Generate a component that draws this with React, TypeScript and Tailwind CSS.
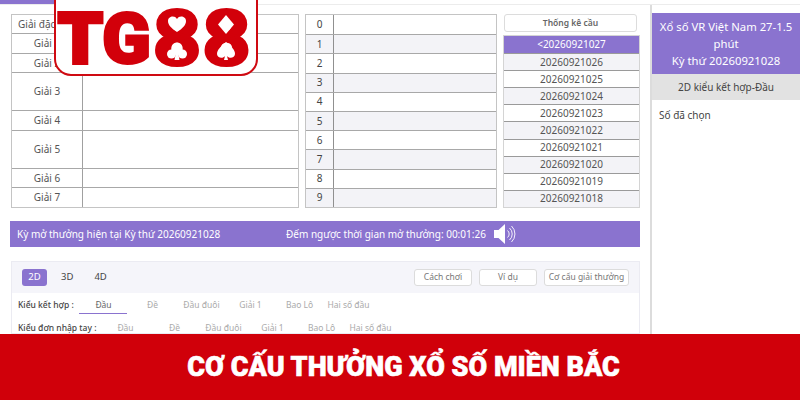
const prizeRows = [
  { label: "Giải đặc biệt", h: "h-[18px]" },
  { label: "Giải 1", h: "h-[20px]" },
  { label: "Giải 2", h: "h-[19px]" },
  { label: "Giải 3", h: "h-[38px]" },
  { label: "Giải 4", h: "h-[20px]" },
  { label: "Giải 5", h: "h-[38px]" },
  { label: "Giải 6", h: "h-[19px]" },
  { label: "Giải 7", h: "h-[20px]" },
];

const issues = [
  "<20260921027",
  "20260921026",
  "20260921025",
  "20260921024",
  "20260921023",
  "20260921022",
  "20260921021",
  "20260921020",
  "20260921019",
  "20260921018",
];

const comboTabs = ["Đầu", "Đề", "Đầu đuôi", "Giải 1", "Bao Lô", "Hai số đầu"];

function PrizeTable() {
  return (
    <div className="w-[288px] border border-[#c4c4c4] bg-white">
      {prizeRows.map((row, i) => (
        <div key={row.label} className={`flex ${row.h} ${i > 0 ? "border-t border-[#a8a8a8]" : ""}`}>
          <div className="flex w-[71px] shrink-0 items-center justify-center whitespace-nowrap border-r border-[#a0a0a0] text-[10px] text-[#555]">
            {row.label}
          </div>
          <div className="flex-1" />
        </div>
      ))}
    </div>
  );
}

function DigitTable() {
  return (
    <div className="ml-[6px] w-[192px] border border-[#c4c4c4]">
      {[0, 1, 2, 3, 4, 5, 6, 7, 8, 9].map((n) => (
        <div
          key={n}
          className={`flex h-[19.2px] ${n > 0 ? "border-t border-[#a8a8a8]" : ""} ${n % 2 ? "bg-[#f3f3f7]" : "bg-white"}`}
        >
          <div className="flex w-[28px] shrink-0 items-center justify-center border-r border-[#909090] text-[10px] text-[#444]">
            {n}
          </div>
          <div className="flex-1" />
        </div>
      ))}
    </div>
  );
}

function IssueList() {
  return (
    <div className="ml-[6px] flex w-[137px] flex-col">
      <div className="mx-[1px] flex h-[18px] w-[133px] items-center justify-center rounded-[3px] border border-[#dcdcdc] bg-white text-[8.5px] font-semibold text-[#666]">
        Thống kê cầu
      </div>
      <div className="mt-[3px] border border-[#d4d4d4]">
        {issues.map((item, i) => (
          <div
            key={item}
            className={`flex h-[17.1px] items-center justify-center text-[10px] ${
              i === 0
                ? "bg-[#8a73cf] text-white"
                : `border-t border-[#9a9a9a] text-[#555] ${i % 2 ? "bg-[#f3f3f7]" : "bg-white"}`
            }`}
          >
            {item}
          </div>
        ))}
      </div>
    </div>
  );
}

function SpeakerIcon() {
  return (
    <svg width="22" height="20" viewBox="0 0 22 20" className="ml-[8px]">
      <path d="M0 6h4.500L11 0v20l-6.500-6H0z" fill="#fff" />
      <path d="M13.500 6.500a4.500 4.500 0 0 1 0 7M15.500 4a8 8 0 0 1 0 12M17.500 2a11 11 0 0 1 0 16" fill="none" stroke="#fff" strokeWidth="0.9" />
    </svg>
  );
}

function TabCells({ active }: { active?: boolean }) {
  return (
    <>
      {comboTabs.map((tab, i) => (
        <span
          key={tab}
          className={`w-[49px] whitespace-nowrap text-center ${active && i === 0 ? "text-[#666]" : "text-[#aaa]"}`}
        >
          {tab}
        </span>
      ))}
    </>
  );
}

function SuitLogo() {
  return (
    <div className="absolute left-[54px] top-[-10px] flex h-[86px] w-[204px] items-center rounded-b-[17px] border-2 border-[#cf0a12] bg-white pl-[5px] pt-[10px]">
      <div className="relative flex h-[60px] w-[192px] items-center font-['Roboto'] text-[71px] leading-none font-black text-[#d2000a]">
        <span className="flex w-[39px] justify-center [-webkit-text-stroke:4px_#d2000a]">T</span>
        <span className="ml-[5px] flex w-[43px] justify-center [-webkit-text-stroke:3px_#d2000a]">G</span>
        <span className="ml-[5px] flex w-[48px] scale-x-[1.18] scale-y-[1.1] justify-center [-webkit-text-stroke:2px_#d2000a]">8</span>
        <span className="ml-[2px] flex w-[47px] scale-x-[1.18] scale-y-[1.1] justify-center [-webkit-text-stroke:2px_#d2000a]">8</span>
        <svg viewBox="0 0 192 60" className="absolute inset-0 h-full w-full">
          <g fill="#fff">
            <path d="M116 24c-6-4-9-7-9-11 0-5 7-6 9-2 2-4 9-3 9 2 0 4-3 7-9 11z" />
            <circle cx="116" cy="39" r="4.500" />
            <circle cx="110.500" cy="46" r="4.500" />
            <circle cx="121.500" cy="46" r="4.500" />
            <path d="M115 44h2l1.500 8h-5z" />
            <path d="M165 7l8 9.500-8 9.500-8-9.500z" />
            <path d="M165 34c6 5 9 8 9 12 0 4-6 5-8 2l1 4h-4l1-4c-2 3-8 2-8-2 0-4 3-7 9-12z" />
          </g>
        </svg>
      </div>
    </div>
  );
}

export default function App() {
  return (
    <div className="relative flex h-[400px] w-[800px] flex-col overflow-hidden bg-white font-['Noto_Sans',sans-serif]">
      <div className="h-[5px] shrink-0 border-b border-[#ececec]">
        <div className="h-[4px] w-[60px] bg-[#8a73cf]" />
      </div>

      <main className="flex min-h-0 flex-1">
        <div className="flex w-[650px] shrink-0 flex-col pl-[10px] pt-[9px]">
          <div className="flex pl-[1px]">
            <PrizeTable />
            <DigitTable />
            <IssueList />
          </div>

          <div className="mt-[13px] flex h-[26px] w-[630px] shrink-0 items-center bg-[#8a73cf] pl-[7px] text-[10px] text-white">
            <span className="w-[269px]">Kỳ mở thưởng hiện tại Kỳ thứ 20260921028</span>
            <span>Đếm ngược thời gian mở thưởng: 00:01:26</span>
            <SpeakerIcon />
          </div>

          <section className="ml-[1px] mt-[14px] min-h-0 w-[629px] flex-1 border border-[#ebebf2] text-[8.5px] text-[#555]">
            <div className="flex h-[31px] items-center justify-between bg-[#f5f5fa] pl-[10px] pr-[10px]">
              <div className="flex items-center text-[9.5px]">
                <span className="flex h-[17px] w-[25px] items-center justify-center rounded-[3px] bg-[#8a73cf] text-white">2D</span>
                <span className="ml-[14px] text-[#444]">3D</span>
                <span className="ml-[21px] text-[#444]">4D</span>
              </div>
              <div className="flex items-center text-[#777]">
                <span className="flex h-[17px] w-[58px] items-center justify-center rounded-[3px] border border-[#dcdcdc] bg-white">Cách chơi</span>
                <span className="ml-[7px] flex h-[17px] w-[58px] items-center justify-center rounded-[3px] border border-[#dcdcdc] bg-white">Ví dụ</span>
                <span className="ml-[7px] flex h-[17px] w-[85px] items-center justify-center whitespace-nowrap rounded-[3px] border border-[#dcdcdc] bg-white">Cơ cấu giải thưởng</span>
              </div>
            </div>

            <div className="relative flex h-[21px] items-center pl-[6px] pt-[3px]">
              <span className="w-[61px] whitespace-nowrap font-medium text-[#444]">Kiểu kết hợp :</span>
              <TabCells active />
              <span className="absolute bottom-0 left-[67px] h-px w-[48px] bg-[#8a73cf]" />
            </div>

            <div className="flex h-[28px] items-center pl-[6px] pt-[1px]">
              <span className="w-[83px] whitespace-nowrap font-medium text-[#444]">Kiểu đơn nhập tay :</span>
              <TabCells />
            </div>
          </section>
        </div>

        <aside className="flex flex-1 flex-col border-l-2 border-[#dcdcdc] pt-[8px]">
          <div className="flex h-[61px] flex-col items-center justify-center bg-[#8a73cf] px-[3px] text-center text-[11.3px] leading-[17px] text-white">
            <span>Xổ số VR Việt Nam 27-1.5 phút</span>
            <span>Kỳ thứ 20260921028</span>
          </div>
          <div className="flex h-[26px] items-center justify-center bg-[#e2e2e2] text-[10px] text-[#444]">
            2D kiểu kết hợp-Đầu
          </div>
          <div className="px-[7px] pt-[8px] text-[10px] text-[#444]">Số đã chọn</div>
        </aside>
      </main>

      <footer className="flex h-[66px] shrink-0 items-center justify-center bg-[#d0000a] pl-[7px] pt-[1px]">
        <h1 className="whitespace-nowrap font-['Roboto'] text-[27px] font-black text-white [-webkit-text-stroke:0.6px_#fff]">
          CƠ CẤU THƯỞNG XỔ SỐ MIỀN BẮC
        </h1>
      </footer>

      <SuitLogo />
    </div>
  );
}
